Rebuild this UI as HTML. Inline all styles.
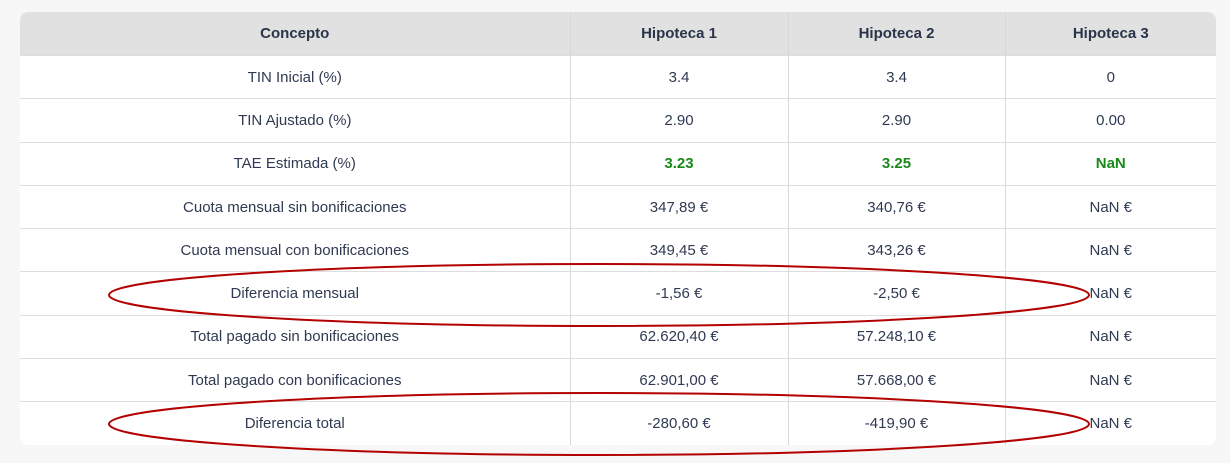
<!DOCTYPE html><html><head><style>
body{margin:0;background:#f7f7f7;width:1230px;height:463px;overflow:hidden;font-family:"Liberation Sans",sans-serif;position:relative}
table{position:absolute;left:20px;top:12px;width:1196px;table-layout:fixed;border-collapse:collapse;background:#fff;border-radius:8px;overflow:hidden;font-size:15px;color:#2f3a52}
th{background:#e1e1e1;height:43px;font-weight:bold;color:#2a3449;padding:0}
td{height:42.3px;text-align:center;border-top:1px solid #ddd;padding:0}
th,td{border-left:1px solid #d8d8d8}
th:first-child,td:first-child{border-left:none}
.g{color:#198a19;font-weight:bold}
svg{position:absolute;left:0;top:0}
</style></head><body>
<table>
<colgroup><col style="width:550px"><col style="width:218px"><col style="width:217px"><col style="width:211px"></colgroup>
<tr><th>Concepto</th><th>Hipoteca 1</th><th>Hipoteca 2</th><th>Hipoteca 3</th></tr>
<tr><td>TIN Inicial (%)</td><td>3.4</td><td>3.4</td><td>0</td></tr>
<tr><td>TIN Ajustado (%)</td><td>2.90</td><td>2.90</td><td>0.00</td></tr>
<tr><td>TAE Estimada (%)</td><td class="g">3.23</td><td class="g">3.25</td><td class="g">NaN</td></tr>
<tr><td>Cuota mensual sin bonificaciones</td><td>347,89 €</td><td>340,76 €</td><td>NaN €</td></tr>
<tr><td>Cuota mensual con bonificaciones</td><td>349,45 €</td><td>343,26 €</td><td>NaN €</td></tr>
<tr><td>Diferencia mensual</td><td>-1,56 €</td><td>-2,50 €</td><td>NaN €</td></tr>
<tr><td>Total pagado sin bonificaciones</td><td>62.620,40 €</td><td>57.248,10 €</td><td>NaN €</td></tr>
<tr><td>Total pagado con bonificaciones</td><td>62.901,00 €</td><td>57.668,00 €</td><td>NaN €</td></tr>
<tr><td>Diferencia total</td><td>-280,60 €</td><td>-419,90 €</td><td>NaN €</td></tr>
</table>
<svg width="1230" height="463"><g fill="none" stroke="#b30000" stroke-width="2">
<ellipse cx="599" cy="295" rx="490" ry="31"/>
<ellipse cx="599" cy="424" rx="490" ry="31"/></g></svg>
</body></html>
